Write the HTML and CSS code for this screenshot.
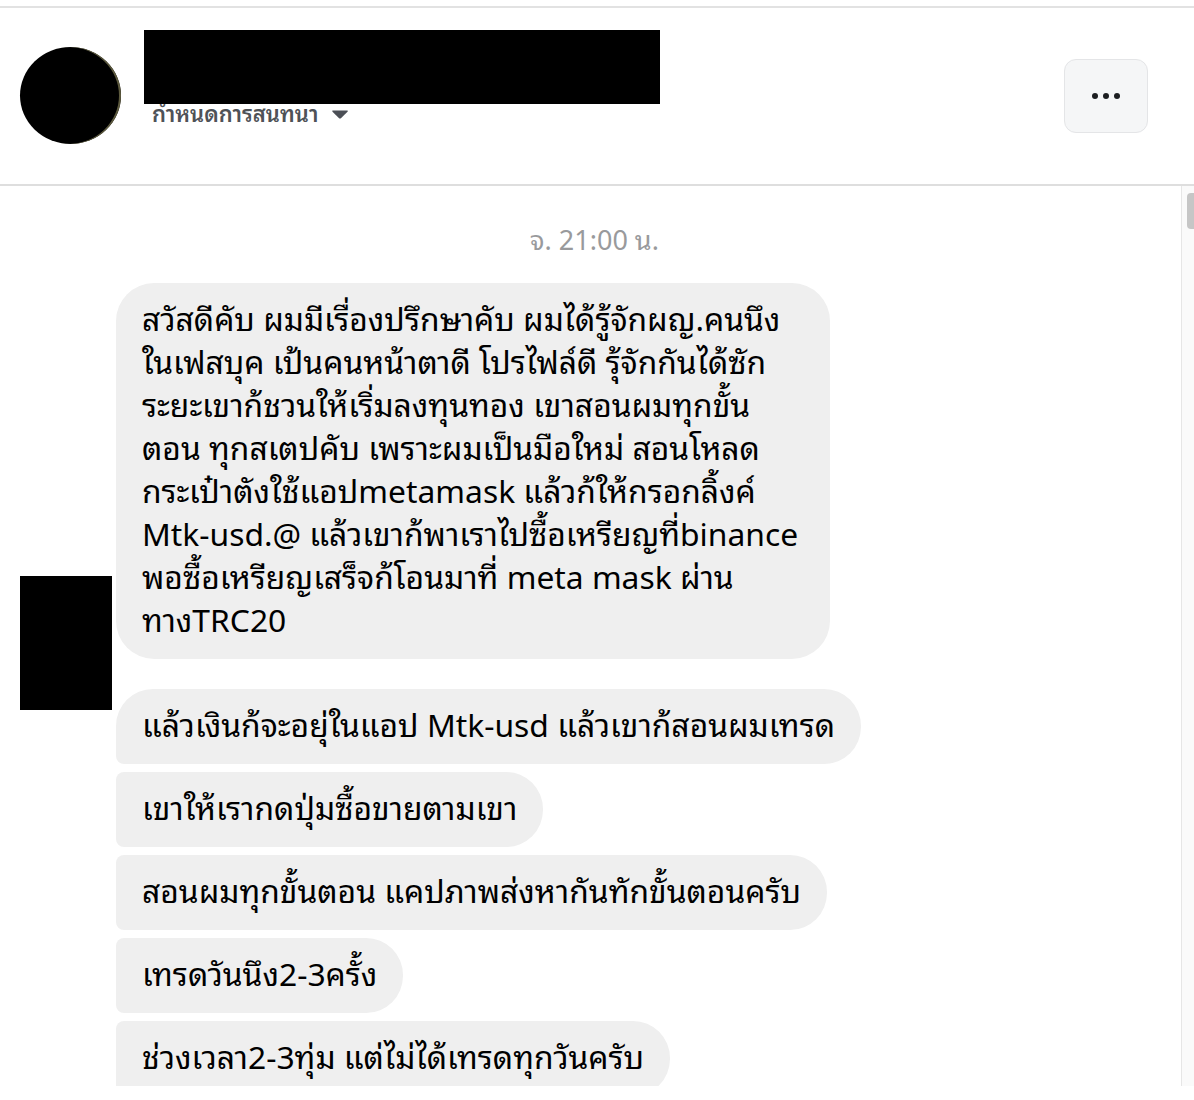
FILE: index.html
```html
<!DOCTYPE html>
<html lang="th">
<head>
<meta charset="utf-8">
<title>Messenger</title>
<link rel="stylesheet" href="styles.css">
</head>
<body>
<div class="app">
  <header class="topbar">
    <div class="avatar"></div>
    <div class="info">
      <div class="name-redact"></div>
      <div class="subtitle">
        <span class="subtitle-text">กำหนดการสนทนา</span>
        <svg class="caret" width="18" height="10" viewBox="0 0 18 10"><path d="M2 1.5 H16 Q17.5 1.5 16.5 2.8 L10.2 9 Q9 10 7.8 9 L1.5 2.8 Q0.5 1.5 2 1.5 Z" fill="#4b4f56"/></svg>
      </div>
    </div>
    <button class="more" type="button" aria-label="more">
      <span class="dot"></span><span class="dot"></span><span class="dot"></span>
    </button>
  </header>

  <div class="chat">
    <div class="messages">
      <div class="redact-avatar"></div>
      <div class="stamp">จ. 21:00 น.</div>
      <div class="group">
        <div class="bubble single wide">สวัสดีคับ ผมมีเรื่องปรึกษาคับ ผมได้รู้จักผญ.คนนึง<br>ในเฟสบุค เป้นคนหน้าตาดี โปรไฟล์ดี รุ้จักกันได้ซัก<br>ระยะเขาก้ชวนให้เริ่มลงทุนทอง เขาสอนผมทุกขั้น<br>ตอน ทุกสเตปคับ เพราะผมเป็นมือใหม่ สอนโหลด<br>กระเป๋าตังใช้แอปmetamask แล้วก้ให้กรอกลิ้งค์<br>Mtk-usd.@ แล้วเขาก้พาเราไปซื้อเหรียญที่binance<br>พอซื้อเหรียญเสร็จก้โอนมาที่ meta mask ผ่าน<br>ทางTRC20</div>
      </div>
      <div class="group">
        <div class="bubble first">แล้วเงินก้จะอยุ่ในแอป Mtk-usd แล้วเขาก้สอนผมเทรด</div>
        <div class="bubble middle">เขาให้เรากดปุ่มซื้อขายตามเขา</div>
        <div class="bubble middle">สอนผมทุกขั้นตอน แคปภาพส่งหากันทักขั้นตอนครับ</div>
        <div class="bubble middle">เทรดวันนึง2-3ครั้ง</div>
        <div class="bubble middle">ช่วงเวลา2-3ทุ่ม แต่ไม่ได้เทรดทุกวันครับ</div>
      </div>
    </div>
    <div class="scrollbar"><div class="thumb"></div></div>
  </div>
</div>
</body>
</html>
```
FILE: styles.css
```css
html, body {
  margin: 0;
  padding: 0;
  background: #ffffff;
}
body {
  font-family: "Noto Sans Thai Looped", "Loma", "Garuda", "Tlwg Typo", "Noto Sans Thai", "Noto Sans", "Liberation Sans", sans-serif;
  color: #000;
}
.app {
  padding-top: 6px;
  width: 1194px;
}
.topbar {
  border-top: 2px solid #e2e2e2;
  border-bottom: 2px solid #dedede;
  height: 176px;
  box-sizing: content-box;
  display: flex;
  align-items: flex-start;
  position: relative;
}
.avatar {
  width: 101px;
  height: 97px;
  border-radius: 50%;
  background: #000;
  margin: 39px 0 0 20px;
  flex: none;
  box-shadow: inset -2px 0 0 #5d5a3e;
}
.info {
  margin: 22px 0 0 23px;
  display: flex;
  flex-direction: column;
  flex: none;
  position: relative;
}
.name-redact {
  width: 516px;
  height: 74px;
  background: #000;
  position: relative;
  z-index: 2;
}
.subtitle {
  display: flex;
  align-items: center;
  gap: 12px;
  margin: -8px 0 0 8px;
  height: 32px;
}
.subtitle-text {
  font-size: 22px;
  line-height: 32px;
  color: #4f5257;
  font-weight: 600;
}
.caret {
  margin-top: 4px;
}
.more {
  margin: 51px 0 0 auto;
  margin-right: 46px;
  width: 84px;
  height: 74px;
  border-radius: 12px;
  background: #f5f6f7;
  border: 1px solid #e4e5e7;
  display: flex;
  align-items: center;
  justify-content: center;
  gap: 5px;
  padding: 0;
  flex: none;
}
.dot {
  width: 6px;
  height: 6px;
  border-radius: 50%;
  background: #1c1e21;
}
.chat {
  display: flex;
  height: 900px;
  overflow: hidden;
}
.messages {
  flex: 1;
  position: relative;
  padding-left: 116px;
}
.stamp {
  text-align: center;
  font-size: 27px;
  line-height: 32px;
  color: #999a9c;
  padding: 36px 0 0 0;
  margin-left: -108px;
  margin-bottom: 29px;
}
.group {
  display: flex;
  flex-direction: column;
  align-items: flex-start;
  gap: 8px;
  margin-bottom: 30px;
}
.bubble {
  background: #efefef;
  font-size: 31.8px;
  line-height: 43px;
  padding: 12px 26px 20px;
  white-space: nowrap;
  border-radius: 37px;
}
.bubble.wide {
  width: 714px;
  box-sizing: border-box;
  border-radius: 38px;
}
.bubble.first {
  border-radius: 37px 37px 37px 8px;
}
.bubble.middle {
  border-radius: 8px 37px 37px 8px;
}
.redact-avatar {
  position: absolute;
  left: 20px;
  top: 390px;
  width: 92px;
  height: 134px;
  background: #000;
}
.scrollbar {
  width: 13px;
  flex: none;
  border-left: 1px solid #e6e6e6;
  background: #fafafa;
  padding: 7px 0 0 5px;
  box-sizing: border-box;
}
.thumb {
  height: 36px;
  width: 8px;
  border-radius: 4px 0 0 4px;
  background: #c6c6c6;
}
```
